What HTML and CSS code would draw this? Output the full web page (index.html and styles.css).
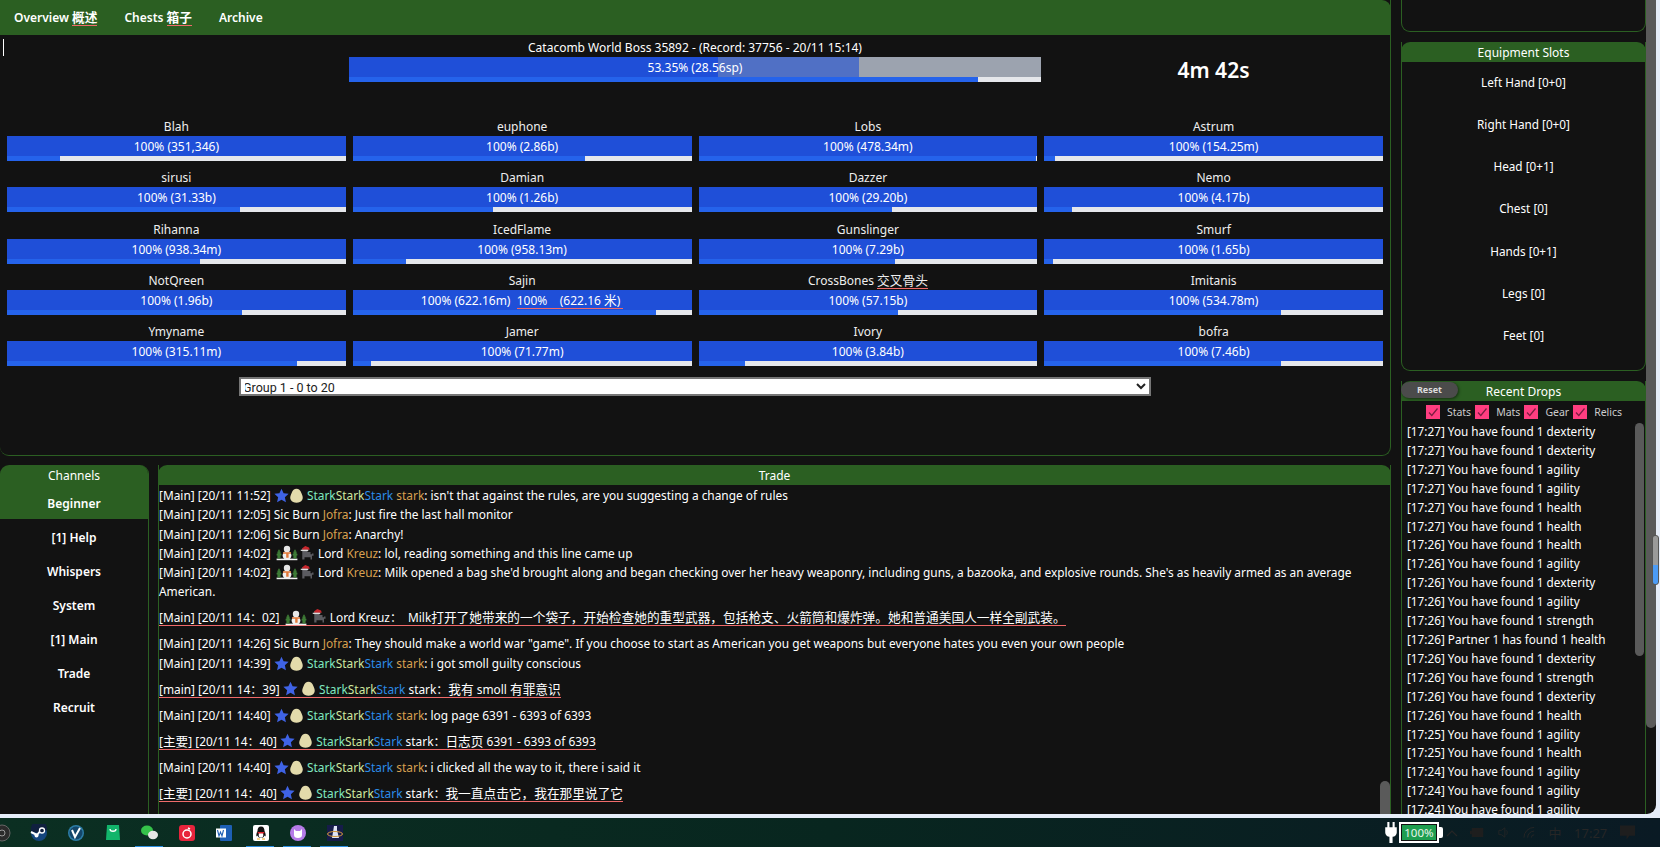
FILE: index.html
```html
<!DOCTYPE html>
<html lang="en">
<head>
  <meta charset="UTF-8">
  <title>Catacomb World Boss</title>
  <link rel="stylesheet" href="styles.css">
</head>
<body>

  <svg class="defs" width="0" height="0">
    <symbol id="star" viewBox="0 0 20 20"><polygon points="10,1 12.8,7 19.5,7.8 14.5,12.3 15.9,19 10,15.6 4.1,19 5.5,12.3 0.5,7.8 7.2,7" fill="#3f63e6"/></symbol>
    <symbol id="egg" viewBox="0 0 20 20"><path d="M10 1c3 0 5 2 6.500 5.500C18.500 11 19 13 17.500 16c-1.500 2.500-4 3.500-7.500 3.500S4 18.500 2.500 16C1 13 1.500 11 3.500 6.500 5 3 7 1 10 1z" fill="#e3dbab"/></symbol>
    <symbol id="snow" viewBox="0 0 28 20">
      <rect x="1" y="17" width="26" height="2" fill="#f4f4f4"/>
      <path d="M3 6h2v2h1v3h1v2H6v4H2v-4H1v-2h1V8h1z" fill="#3d7a35"/>
      <path d="M23 6h2v2h1v3h1v2h-1v4h-4v-4h-1v-2h1V8h1z" fill="#3d7a35"/>
      <circle cx="14" cy="5" r="4" fill="#e8e8e8"/>
      <circle cx="14" cy="13" r="5.500" fill="#efefef"/>
      <path d="M9 9h10v2h-3v5h-3v-5H9z" fill="#e2793a"/>
    </symbol>
    <symbol id="cat" viewBox="0 0 20 20">
      <path d="M3 8h11v3h2v-1h2v3h-2v5h-2v-3H6v3H3z" fill="#5b5b60"/>
      <path d="M3 3h2v1h3V3h2v5H3z" fill="#66666b"/>
      <path d="M3 3l4-3 5 2 1 3H3z" fill="#c8262c"/>
      <rect x="1" y="5" width="10" height="1.500" fill="#eee"/>
    </symbol>
    <symbol id="chk" viewBox="0 0 14 14"><path d="M3 7.500l2.800 3L11.500 3.500" fill="none" stroke="#7a1d40" stroke-width="1.200"/></symbol>
  </svg>

  <div class="window">
    <div class="main-col">

      <section class="panel overview">
        <nav class="tabs">
          <a>Overview <span class="tr zh">概述</span></a>
          <a>Chests <span class="tr zh">箱子</span></a>
          <a>Archive</a>
        </nav>
        <i class="caret"></i>
        <div class="boss-title">Catacomb World Boss 35892 - (Record: 37756 - 20/11 15:14)</div>
        <div class="boss-row">
          <div class="bar boss-bar">
            <div class="bar-top">
              <span class="seg seg-mid"></span>
              <span class="seg seg-grey"></span>
              <span class="bar-label">53.35% (28.56sp)</span>
            </div>
            <div class="bar-low"><span style="width:90.9%"></span></div>
          </div>
          <div class="timer">4m 42s</div>
        </div>

        <div class="members">
          <div class="member"><div class="name">Blah</div><div class="bar"><div class="bar-top"><span class="bar-label">100% (351,346)</span></div><div class="bar-low"><span style="width:15.6%"></span></div></div></div>
          <div class="member"><div class="name">euphone</div><div class="bar"><div class="bar-top"><span class="bar-label">100% (2.86b)</span></div><div class="bar-low"><span style="width:68.6%"></span></div></div></div>
          <div class="member"><div class="name">Lobs</div><div class="bar"><div class="bar-top"><span class="bar-label">100% (478.34m)</span></div><div class="bar-low"><span style="width:99.7%"></span></div></div></div>
          <div class="member"><div class="name">Astrum</div><div class="bar"><div class="bar-top"><span class="bar-label">100% (154.25m)</span></div><div class="bar-low"><span style="width:3.2%"></span></div></div></div>

          <div class="member"><div class="name">sirusi</div><div class="bar"><div class="bar-top"><span class="bar-label">100% (31.33b)</span></div><div class="bar-low"><span style="width:68.8%"></span></div></div></div>
          <div class="member"><div class="name">Damian</div><div class="bar"><div class="bar-top"><span class="bar-label">100% (1.26b)</span></div><div class="bar-low"><span style="width:41.4%"></span></div></div></div>
          <div class="member"><div class="name">Dazzer</div><div class="bar"><div class="bar-top"><span class="bar-label">100% (29.20b)</span></div><div class="bar-low"><span style="width:57%"></span></div></div></div>
          <div class="member"><div class="name">Nemo</div><div class="bar"><div class="bar-top"><span class="bar-label">100% (4.17b)</span></div><div class="bar-low"><span style="width:8.3%"></span></div></div></div>

          <div class="member"><div class="name">Rihanna</div><div class="bar"><div class="bar-top"><span class="bar-label">100% (938.34m)</span></div><div class="bar-low"><span style="width:57%"></span></div></div></div>
          <div class="member"><div class="name">IcedFlame</div><div class="bar"><div class="bar-top"><span class="bar-label">100% (958.13m)</span></div><div class="bar-low"><span style="width:15.6%"></span></div></div></div>
          <div class="member"><div class="name">Gunslinger</div><div class="bar"><div class="bar-top"><span class="bar-label">100% (7.29b)</span></div><div class="bar-low"><span style="width:58%"></span></div></div></div>
          <div class="member"><div class="name">Smurf</div><div class="bar"><div class="bar-top"><span class="bar-label">100% (1.65b)</span></div><div class="bar-low"><span style="width:2.7%"></span></div></div></div>

          <div class="member"><div class="name">NotQreen</div><div class="bar"><div class="bar-top"><span class="bar-label">100% (1.96b)</span></div><div class="bar-low"><span style="width:69.3%"></span></div></div></div>
          <div class="member"><div class="name">Sajin</div><div class="bar"><div class="bar-top"><span class="bar-label">100% (622.16m) &nbsp;<span class="tr">100% &nbsp;&nbsp; (622.16 <span class="zh">米</span>)&nbsp;</span></span></div><div class="bar-low"><span style="width:89.6%"></span></div></div></div>
          <div class="member"><div class="name">CrossBones <span class="tr zh">交叉骨头</span></div><div class="bar"><div class="bar-top"><span class="bar-label">100% (57.15b)</span></div><div class="bar-low"><span style="width:59%"></span></div></div></div>
          <div class="member"><div class="name">Imitanis</div><div class="bar"><div class="bar-top"><span class="bar-label">100% (534.78m)</span></div><div class="bar-low"><span style="width:69.9%"></span></div></div></div>

          <div class="member"><div class="name">Ymyname</div><div class="bar"><div class="bar-top"><span class="bar-label">100% (315.11m)</span></div><div class="bar-low"><span style="width:85.5%"></span></div></div></div>
          <div class="member"><div class="name">Jamer</div><div class="bar"><div class="bar-top"><span class="bar-label">100% (71.77m)</span></div><div class="bar-low"><span style="width:5.3%"></span></div></div></div>
          <div class="member"><div class="name">Ivory</div><div class="bar"><div class="bar-top"><span class="bar-label">100% (3.84b)</span></div><div class="bar-low"><span style="width:13.6%"></span></div></div></div>
          <div class="member"><div class="name">bofra</div><div class="bar"><div class="bar-top"><span class="bar-label">100% (7.46b)</span></div><div class="bar-low"><span style="width:69.9%"></span></div></div></div>
        </div>

        <select class="group-select">
          <option>Group 1 - 0 to 20</option>
        </select>
      </section>

      <div class="chat-row">
        <aside class="channels">
          <div class="channels-head">Channels</div>
          <div class="channel active">Beginner</div>
          <div class="channel">[1] Help</div>
          <div class="channel">Whispers</div>
          <div class="channel">System</div>
          <div class="channel">[1] Main</div>
          <div class="channel">Trade</div>
          <div class="channel">Recruit</div>
        </aside>

        <section class="chat">
          <div class="panel-head">Trade</div>
          <div class="log">
            <p>[Main] [20/11 11:52] <svg class="ico"><use href="#star"/></svg><svg class="ico"><use href="#egg"/></svg> <b class="c1">Stark</b><b class="c2">Stark</b><b class="c3">Stark</b> <b class="c4">stark</b>: isn't that against the rules, are you suggesting a change of rules</p>
            <p>[Main] [20/11 12:05] Sic Burn <b class="c4">Jofra</b>: Just fire the last hall monitor</p>
            <p>[Main] [20/11 12:06] Sic Burn <b class="c4">Jofra</b>: Anarchy!</p>
            <p>[Main] [20/11 14:02] <svg class="ico-wide"><use href="#snow"/></svg><svg class="ico"><use href="#cat"/></svg> Lord <b class="c4">Kreuz</b>: lol, reading something and this line came up</p>
            <p>[Main] [20/11 14:02] <svg class="ico-wide"><use href="#snow"/></svg><svg class="ico"><use href="#cat"/></svg> Lord <b class="c4">Kreuz</b>: Milk opened a bag she'd brought along and began checking over her heavy weaponry, including guns, a bazooka, and explosive rounds. She's as heavily armed as an average<br>American.</p>
            <p class="tr-line"><span class="tr">[Main] [20/11 14：02] <svg class="ico-wide"><use href="#snow"/></svg> <svg class="ico"><use href="#cat"/></svg> Lord Kreuz： &nbsp;Milk<span class="zh">打开了她带来的一个袋子，开始检查她的重型武器，包括枪支、火箭筒和爆炸弹。她和普通美国人一样全副武装。</span></span></p>
            <p>[Main] [20/11 14:26] Sic Burn <b class="c4">Jofra</b>: They should make a world war "game". If you choose to start as American you get weapons but everyone hates you even your own people</p>
            <p>[Main] [20/11 14:39] <svg class="ico"><use href="#star"/></svg><svg class="ico"><use href="#egg"/></svg> <b class="c1">Stark</b><b class="c2">Stark</b><b class="c3">Stark</b> <b class="c4">stark</b>: i got smoll guilty conscious</p>
            <p class="tr-line"><span class="tr">[main] [20/11 14：39] <svg class="ico"><use href="#star"/></svg> <svg class="ico"><use href="#egg"/></svg> <b class="c1">Stark</b><b class="c2">Stark</b><b class="c3">Stark</b> stark：<span class="zh">我有</span> smoll <span class="zh">有罪意识</span></span></p>
            <p>[Main] [20/11 14:40] <svg class="ico"><use href="#star"/></svg><svg class="ico"><use href="#egg"/></svg> <b class="c1">Stark</b><b class="c2">Stark</b><b class="c3">Stark</b> <b class="c4">stark</b>: log page 6391 - 6393 of 6393</p>
            <p class="tr-line"><span class="tr">[<span class="zh">主要</span>] [20/11 14：40] <svg class="ico"><use href="#star"/></svg> <svg class="ico"><use href="#egg"/></svg> <b class="c1">Stark</b><b class="c2">Stark</b><b class="c3">Stark</b> stark：<span class="zh">日志页</span> 6391 - 6393 of 6393</span></p>
            <p>[Main] [20/11 14:40] <svg class="ico"><use href="#star"/></svg><svg class="ico"><use href="#egg"/></svg> <b class="c1">Stark</b><b class="c2">Stark</b><b class="c3">Stark</b> <b class="c4">stark</b>: i clicked all the way to it, there i said it</p>
            <p class="tr-line"><span class="tr">[<span class="zh">主要</span>] [20/11 14：40] <svg class="ico"><use href="#star"/></svg> <svg class="ico"><use href="#egg"/></svg> <b class="c1">Stark</b><b class="c2">Stark</b><b class="c3">Stark</b> stark：<span class="zh">我一直点击它，我在那里说了它</span></span></p>
          </div>
          <i class="chat-thumb"></i>
        </section>
      </div>
    </div>

    <div class="side-col">
      <section class="panel stub"></section>

      <section class="panel slots">
        <div class="panel-head">Equipment Slots</div>
        <div class="slot-list">
          <div>Left Hand [0+0]</div>
          <div>Right Hand [0+0]</div>
          <div>Head [0+1]</div>
          <div>Chest [0]</div>
          <div>Hands [0+1]</div>
          <div>Legs [0]</div>
          <div>Feet [0]</div>
        </div>
      </section>

      <section class="panel drops">
        <div class="panel-head">Recent Drops<button class="reset-btn">Reset</button></div>
        <div class="filters">
          <span class="check"><svg><use href="#chk"/></svg></span><span class="filter-name">Stats</span>
          <span class="check"><svg><use href="#chk"/></svg></span><span class="filter-name">Mats</span>
          <span class="check"><svg><use href="#chk"/></svg></span><span class="filter-name">Gear</span>
          <span class="check"><svg><use href="#chk"/></svg></span><span class="filter-name">Relics</span>
        </div>
        <div class="drop-list">
          <div>[17:27] You have found 1 dexterity</div>
          <div>[17:27] You have found 1 dexterity</div>
          <div>[17:27] You have found 1 agility</div>
          <div>[17:27] You have found 1 agility</div>
          <div>[17:27] You have found 1 health</div>
          <div>[17:27] You have found 1 health</div>
          <div>[17:26] You have found 1 health</div>
          <div>[17:26] You have found 1 agility</div>
          <div>[17:26] You have found 1 dexterity</div>
          <div>[17:26] You have found 1 agility</div>
          <div>[17:26] You have found 1 strength</div>
          <div>[17:26] Partner 1 has found 1 health</div>
          <div>[17:26] You have found 1 dexterity</div>
          <div>[17:26] You have found 1 strength</div>
          <div>[17:26] You have found 1 dexterity</div>
          <div>[17:26] You have found 1 health</div>
          <div>[17:25] You have found 1 agility</div>
          <div>[17:25] You have found 1 health</div>
          <div>[17:24] You have found 1 agility</div>
          <div>[17:24] You have found 1 agility</div>
          <div>[17:24] You have found 1 agility</div>
        </div>
        <i class="drops-thumb"></i>
      </section>
    </div>

    <i class="page-thumb"></i>
  </div>

  <i class="edge-slider"></i>

  <footer class="taskbar">
    <div class="task-icons">
      <span class="task"><svg width="18" height="18" viewBox="0 0 18 18"><circle cx="9" cy="9" r="8" fill="#2b2b2b" stroke="#666"/><circle cx="9" cy="9" r="3" fill="none" stroke="#999"/></svg></span>
      <span class="task"><svg width="18" height="18" viewBox="0 0 18 18"><circle cx="9" cy="9" r="8" fill="#15467e"/><path d="M1 3.500A8 8 0 0 1 17 6L9 9 1 8z" fill="#10203f"/><path d="M1 8l6 3 4-5" fill="none" stroke="#fff" stroke-width="2"/><circle cx="12" cy="6.500" r="2.500" fill="#10203f" stroke="#fff" stroke-width="1.300"/><circle cx="6.500" cy="11.500" r="2" fill="#fff"/></svg></span>
      <span class="task"><svg width="18" height="18" viewBox="0 0 18 18"><circle cx="9" cy="9" r="8" fill="#2c7ca6"/><circle cx="9" cy="9" r="6.500" fill="#14466a"/><path d="M5 6l3 7 5-9" fill="none" stroke="#fff" stroke-width="2"/></svg></span>
      <span class="task"><svg width="14" height="15" viewBox="0 0 14 15"><path d="M1 0h12l1 15H0z" fill="#12b56b"/><path d="M4 4c0 3 6 3 6 0" fill="none" stroke="#fff" stroke-width="1.300"/></svg></span>
      <span class="task active"><svg width="17" height="15" viewBox="0 0 17 15"><ellipse cx="6" cy="5.500" rx="6" ry="5" fill="#35c24a"/><ellipse cx="12" cy="10" rx="5" ry="4.200" fill="#e6e6e6"/></svg></span>
      <span class="task"><svg width="16" height="16" viewBox="0 0 16 16"><rect width="16" height="16" rx="3" fill="#e8243c"/><circle cx="8" cy="9" r="4" fill="none" stroke="#fff" stroke-width="1.500"/><path d="M9 3l2 1" stroke="#fff" stroke-width="1.500"/></svg></span>
      <span class="task"><svg width="16" height="16" viewBox="0 0 16 16"><rect x="4" width="12" height="16" rx="1" fill="#1d5fb5"/><rect y="3.500" width="10" height="9" fill="#fff"/><path d="M1.500 5l1.500 6 1.500-4 1.500 4 1.500-6" fill="none" stroke="#1d5fb5" stroke-width="1.100"/></svg></span>
      <span class="task active"><svg width="16" height="16" viewBox="0 0 16 16"><rect width="16" height="16" rx="2" fill="#fff"/><path d="M8 1.500c2.500 0 3.500 2 3.500 4.500 1 2 1.500 4 1 5.500l-1-1c-.5 1.500-1.500 2.500-3.500 2.500s-3-1-3.500-2.500l-1 1c-.5-1.500 0-3.500 1-5.500 0-2.500 1-4.500 3.500-4.500z" fill="#111"/><ellipse cx="8" cy="10" rx="2.300" ry="2.700" fill="#fff"/><path d="M4.500 7h7l-.5 1.500h-6z" fill="#d8232a"/><path d="M4 13.500h3v1H4zM9 13.500h3v1H9z" fill="#f0a91c"/></svg></span>
      <span class="task active"><svg width="16" height="16" viewBox="0 0 16 16"><circle cx="8" cy="8" r="8" fill="#b57be8"/><path d="M4 4l2 2h4l2-2v6a4 3 0 0 1-8 0z" fill="#fff"/></svg></span>
      <span class="task active"><svg width="16" height="16" viewBox="0 0 16 16"><rect width="16" height="16" fill="#161c4a"/><path d="M7 1h3v4l2 8H5z" fill="#dfe4f5"/><ellipse cx="8" cy="9" rx="7.500" ry="2.500" fill="none" stroke="#d69a3c"/></svg></span>
    </div>
    <div class="tray">
      <svg class="plug" width="12" height="21" viewBox="0 0 11 20"><path d="M2 0h2v5h3V0h2v5h2v5a4 4 0 0 1-4 4v6H4v-6a4 4 0 0 1-4-4V5h2z" fill="#fff"/></svg>
      <div class="battery"><span>100%</span></div>
      <svg width="12" height="8" viewBox="0 0 12 8"><path d="M1 7l5-5 5 5" fill="none" stroke="#262626" stroke-width="1.200"/></svg>
      <svg width="15" height="11" viewBox="0 0 17 12"><path d="M0 4h2v4H0zM2 1h13v10H2z" fill="#1e1e1e"/></svg>
      <svg width="12" height="13" viewBox="0 0 14 13"><path d="M1 4h3l4-3v11L4 9H1z" fill="none" stroke="#262626"/><path d="M10 4c1 1 1 4 0 5" fill="none" stroke="#262626"/></svg>
      <svg width="13" height="13" viewBox="0 0 14 13"><path d="M1 12A11 11 0 0 1 12 1M5 12A7 7 0 0 1 12 5M9 12A3 3 0 0 1 12 9" fill="none" stroke="#262626"/></svg>
      <span class="tray-text">中</span>
      <span class="tray-text">17:27</span>
      <svg width="15" height="15" viewBox="0 0 16 15"><path d="M0 0h16v11h-6l-3 4v-4H0z" fill="#1e1e1e"/></svg>
    </div>
  </footer>

</body>
</html>
```

FILE: styles.css
```css
* {
  box-sizing: border-box;
}

html, body {
  height: 100%;
}

body {
  margin: 0;
  background-color: #e6edf9;
  color: #fff;
  font-family: "Noto Sans", "Noto Sans CJK SC", sans-serif;
  font-size: 12px;
  line-height: 20px;
  overflow: hidden;
  position: relative;
}

.defs {
  position: absolute;
}

.zh {
  font-size: 12.7px;
}

.window {
  position: relative;
  display: flex;
  gap: 10px;
  width: 1656px;
  height: 814px;
  padding-right: 10px;
  background-color: #121212;
  border-bottom-right-radius: 9px;
  overflow: hidden;
}

.main-col {
  width: 1391px;
  display: flex;
  flex-direction: column;
  gap: 9px;
}

.side-col {
  width: 245px;
  display: flex;
  flex-direction: column;
  gap: 10px;
}

.panel {
  position: relative;
  border: 1px solid #2b5f22;
  border-top: none;
  border-radius: 0 0 9px 9px;
}

.panel-head {
  position: relative;
  height: 20px;
  margin: 0 -1px;
  padding-top: 1px;
  background-color: #2b5f22;
  border-radius: 9px 9px 0 0;
  text-align: center;
}

.tr {
  display: inline-block;
  line-height: 15px;
  border-bottom: 1px solid #f06a6a;
}

/* top panel */
.overview {
  height: 456px;
  border-left: none;
}

.tabs {
  display: flex;
  height: 35px;
  padding: 0 0 0 14px;
  margin-right: -1px;
  gap: 27px;
  align-items: center;
  background-color: #2b5f22;
  border-top-right-radius: 9px;
  font-weight: 600;
}

.caret {
  position: absolute;
  left: 3px;
  top: 39px;
  width: 1px;
  height: 17px;
  background-color: #fff;
}

.boss-title {
  text-align: center;
  height: 20px;
  margin-top: 2px;
  padding-top: 1px;
}

.boss-row {
  display: flex;
  margin-left: 349px;
  height: 25px;
}

.boss-bar {
  width: 692px;
}

.timer {
  width: 344px;
  padding-left: 1px;
  text-align: center;
  font-size: 21px;
  line-height: 26px;
  font-weight: 600;
}

.bar-top {
  position: relative;
  height: 20px;
  padding-top: 1px;
  background-color: #1f4fd8;
  text-align: center;
  line-height: 20px;
}

.bar-label {
  position: relative;
}

.seg {
  position: absolute;
  top: 0;
  bottom: 0;
}

.seg-mid {
  left: 369px;
  width: 141px;
  background-color: #5070c5;
}

.seg-grey {
  left: 510px;
  right: 0;
  background-color: #9ca3af;
}

.bar-low {
  height: 5px;
  background-color: #e5e7eb;
}

.bar-low span {
  display: block;
  height: 100%;
  background-color: #2563eb;
}

.members {
  display: grid;
  grid-template-columns: repeat(4, 1fr);
  column-gap: 7px;
  row-gap: 6.25px;
  margin: 34px 7px 0;
}

.name {
  height: 20px;
  padding-top: 1px;
  text-align: center;
  color: #eee;
}

.group-select {
  display: block;
  width: 912px;
  height: 19px;
  margin: 11px 0 0 239px;
  padding: 0;
  background-color: #fff;
  color: #222;
  border: 2px solid #767676;
  border-radius: 0;
  font-family: Roboto, sans-serif;
  font-size: 12.5px;
  text-indent: -2px;
}

/* channels + chat */
.chat-row {
  flex: 1;
  display: flex;
  gap: 9px;
  min-height: 0;
}

.channels {
  width: 149px;
  border-right: 1px solid #2b5f22;
  border-radius: 9px 9px 0 0;
  overflow: hidden;
}

.channels-head {
  height: 20px;
  padding-top: 1px;
  background-color: #2b5f22;
  text-align: center;
}

.channel {
  height: 34px;
  padding-top: 2px;
  line-height: 34px;
  text-align: center;
  font-weight: 600;
}

.channel.active {
  background-color: #2b5f22;
}

.chat {
  position: relative;
  flex: 1;
  min-width: 0;
  border-left: 1px solid #2b5f22;
  border-right: 1px solid #2b5f22;
}

.log {
  padding-top: 1px;
  font-size: 11.9px;
}

.log p {
  margin: 0;
  line-height: 19.3px;
  white-space: nowrap;
}

.log p.tr-line {
  height: 19px;
  margin: 6.5px 0 7.2px;
}

.log b {
  font-weight: 400;
}

.c1 { color: #7fe8c0; }
.c2 { color: #cfe8a0; }
.c3 { color: #2c8ce8; }
.c4 { color: #d8a050; }

.ico {
  width: 15px;
  height: 15px;
  vertical-align: -3px;
}

.ico-wide {
  width: 26px;
  height: 16px;
  vertical-align: -3px;
}

.tr-line svg {
  margin: -4px 0;
}

.tr-line .ico {
  vertical-align: 2px;
}

.tr-line .ico-wide {
  vertical-align: 0;
}

.chat-thumb {
  position: absolute;
  right: 0;
  bottom: 0;
  width: 10px;
  height: 33px;
  background-color: #5a5a5a;
  border-radius: 5px 5px 0 0;
}

/* right column */
.stub {
  height: 32px;
  flex: none;
}

.slots {
  height: 329px;
  flex: none;
  border-top: none;
}

.slot-list {
  display: flex;
  flex-direction: column;
  gap: 22.3px;
  padding-top: 9.5px;
  text-align: center;
  font-size: 11.75px;
}

.drops {
  flex: 1;
  min-height: 0;
  border-bottom: none;
  border-radius: 0;
}

.reset-btn {
  position: absolute;
  left: 0;
  top: 1px;
  width: 57px;
  height: 16px;
  padding: 0;
  background-color: #4b4b4b;
  color: #ddd;
  border: none;
  border-radius: 8px;
  box-shadow: 1px 1px 3px rgba(0, 0, 0, 0.5);
  font-family: inherit;
  font-size: 9px;
  font-weight: 700;
  line-height: 16px;
}

.filters {
  display: flex;
  align-items: center;
  justify-content: center;
  height: 21px;
  padding-left: 5px;
  color: #ccc;
  font-size: 10.5px;
}

.check {
  display: block;
  width: 14px;
  height: 14px;
  background-color: #ff3d80;
  margin-right: 7px;
}

.check svg {
  display: block;
  width: 14px;
  height: 14px;
}

.filter-name {
  margin-right: 4px;
}

.drop-list {
  padding: 0 0 0 5px;
  font-size: 11.75px;
  line-height: 18.9px;
  white-space: nowrap;
}

.drops-thumb {
  position: absolute;
  right: 1px;
  top: 42px;
  width: 9px;
  height: 233px;
  background-color: #5a5a5a;
  border-radius: 5px;
}

.page-thumb {
  position: absolute;
  right: 0;
  top: 0;
  width: 10px;
  height: 728px;
  background-color: #5a5a5a;
  border-radius: 0 0 5px 5px;
}

.edge-slider {
  position: absolute;
  left: 1652px;
  top: 535px;
  width: 7px;
  height: 50px;
  border: 1px solid #555;
  border-radius: 3px;
  background: linear-gradient(#9a9a9a 60%, #4c9bf5 60%);
}

/* taskbar */
.taskbar {
  position: absolute;
  left: 0;
  right: 0;
  bottom: 0;
  height: 29px;
  display: flex;
  justify-content: space-between;
  background: linear-gradient(90deg, #0b2f22, #08261f 50%, #0a1a24);
}

.task-icons {
  display: flex;
  margin-left: -17px;
}

.task {
  width: 37px;
  display: flex;
  align-items: center;
  justify-content: center;
  position: relative;
}

.task.active::after {
  content: "";
  position: absolute;
  left: 4px;
  right: 5px;
  bottom: 0;
  height: 1px;
  background-color: #2b8fe0;
}

.tray {
  display: flex;
  align-items: center;
  gap: 12.7px;
  padding-right: 25px;
}

.plug {
  margin-right: -10.7px;
}

.battery {
  position: relative;
  width: 40px;
  height: 21px;
  padding: 1px;
  margin-right: -6px;
  border: 2px solid #fff;
  background-color: #111;
}

.battery::after {
  content: "";
  position: absolute;
  right: -6px;
  top: 3px;
  width: 4px;
  height: 11px;
  background-color: #fff;
  border-radius: 0 2px 2px 0;
}

.battery span {
  display: block;
  height: 100%;
  background-color: #1e9e50;
  color: #e8f4ea;
  font-size: 11.5px;
  line-height: 15px;
  text-align: center;
}

.tray-text {
  color: #262626;
  font-size: 13px;
}
```
